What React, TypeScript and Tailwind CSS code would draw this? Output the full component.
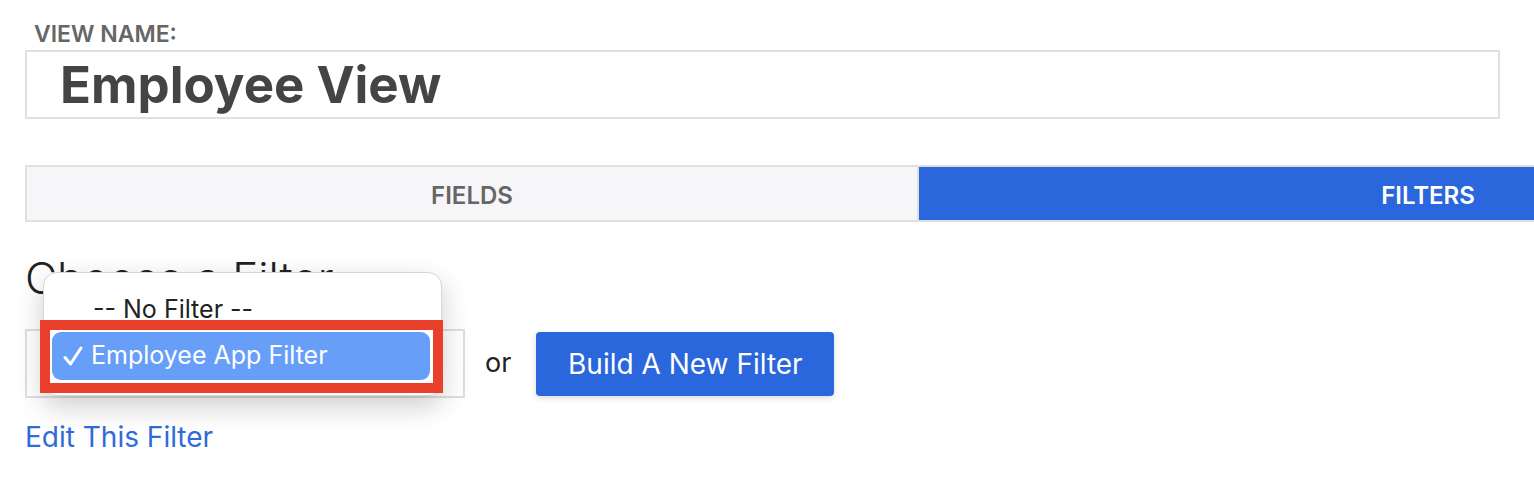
const OPTIONS = ['-- No Filter --', 'Employee App Filter']

function FilterPopup() {
  return (
    <>
      <div className="absolute left-[16px] top-[-59px] w-[399px] h-[124px] rounded-[14px] bg-white border border-[#d6d6d6] shadow-[0_10px_28px_rgba(0,0,0,0.2)]">
        <div className="pt-[24px] pl-[49px] text-[25px] leading-none text-[#222]">{OPTIONS[0]}</div>
      </div>
      <div className="absolute left-[13px] top-[-11px] w-[403px] h-[73px] border-[10px] border-[#e8402a] bg-white p-[2px]">
        <div className="h-[48px] w-[378px] rounded-[9px] bg-[#669ef8] flex items-center pl-[10px] text-white text-[25px]">
          <svg className="w-[22px] h-[22px] mr-[7px]" viewBox="0 0 22 22" fill="none">
            <path d="M3 12.5 L8.5 19 L19 3" stroke="white" strokeWidth="3" strokeLinecap="round" strokeLinejoin="round" />
          </svg>
          <span>{OPTIONS[1]}</span>
        </div>
      </div>
    </>
  )
}

export default function App() {
  return (
    <div className="relative w-[1534px] h-[480px] overflow-hidden bg-white font-['Inter',sans-serif]">
      <div className="pl-[25px] pt-[23px]">
        <div className="ml-[9px] text-[23px] font-semibold leading-none text-[#666] uppercase">View Name:</div>
        <div className="mt-[4px] w-[1475px] h-[69px] border-2 border-[#e0e0e0] flex items-center pl-[33px] text-[51px] font-bold text-[#444] leading-none">
          Employee View
        </div>

        <div className="mt-[46px] flex w-[1912px] h-[57px]">
          <div className="w-[894px] border-2 border-[#e0e0e0] bg-[#f6f6f8] flex items-center justify-center pt-[5px] text-[24px] font-semibold text-[#666]">
            FIELDS
          </div>
          <div className="w-[1018px] border-y-2 border-[#e0e0e0] bg-[#2a66dc] flex items-center justify-center pt-[5px] text-[24px] font-semibold text-white">
            FILTERS
          </div>
        </div>

        <h2 className="mt-[34px] text-[44px] font-light leading-none text-[#222]">Choose a Filter</h2>

        <div className="mt-[29px] flex items-center">
          <div className="relative w-[440px] h-[69px] border-2 border-[#dedede] bg-white">
            <FilterPopup />
          </div>
          <span className="ml-[20px] text-[27px] text-[#222]">or</span>
          <button className="ml-[25px] w-[298px] h-[64px] rounded-[4px] bg-[#2a66dc] text-white text-[28px] shadow-[0_2px_6px_rgba(0,0,0,0.15)]">
            Build A New Filter
          </button>
        </div>

        <a className="block mt-[25px] text-[28px] text-[#2f6bd9] leading-none">Edit This Filter</a>
      </div>
    </div>
  )
}
